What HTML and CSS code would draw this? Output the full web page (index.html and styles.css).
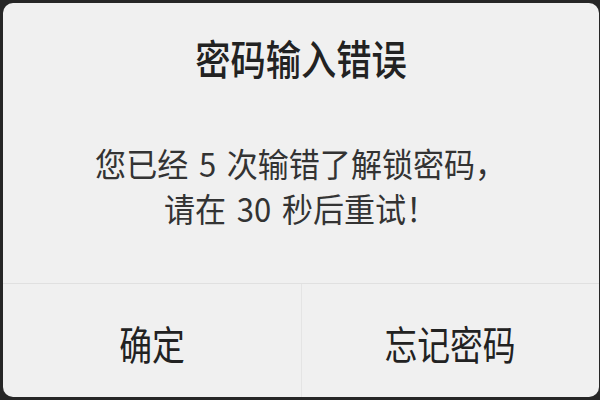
FILE: index.html
```html
<!DOCTYPE html>
<html lang="zh-CN">
<head>
    <meta charset="UTF-8">
    <link rel="stylesheet" href="styles.css">
    <title>密码输入错误</title>
</head>
<body>
<div class="dialog">
    <div class="dialogBody">
        <h2 class="dialogTitle"><span class="narrow">密码输入错误</span></h2>
        <p class="dialogMessage"><span class="narrow">您已经 5 次输错了解锁密码，<br>请在 30 秒后重试！</span></p>
    </div>
    <div class="dialogActions">
        <button class="actionButton" type="button"><span class="narrow">确定</span></button>
        <button class="actionButton actionRight" type="button"><span class="narrow">忘记密码</span></button>
    </div>
</div>
</body>
</html>
```

FILE: styles.css
```css
html, body {
    margin: 0;
    height: 100%;
}

body {
    background-color: #262626;
    font-family: "Noto Sans CJK SC", "Noto Sans", sans-serif;
    padding: 3px 1px 3px 3px;
    box-sizing: border-box;
}

.dialog {
    height: 100%;
    background-color: #f0f0f0;
    border-radius: 10px;
    display: flex;
    flex-direction: column;
    overflow: hidden;
}

.narrow {
    display: inline-block;
    transform: scaleX(0.86);
}

.dialogBody {
    flex: 1;
    text-align: center;
    color: #2a2a2a;
}

.dialogTitle {
    margin: 31px 0 0 0;
    font-size: 41px;
    font-weight: 500;
    line-height: 46px;
    color: #222;
}

.dialogMessage {
    margin: 61px 0 0 0;
    font-size: 33px;
    line-height: 45px;
    color: #333;
    word-spacing: 4px;
}

.dialogMessage .narrow {
    transform: scaleX(0.94);
}

.dialogActions {
    height: 113px;
    border-top: 1px solid #e0e0e0;
    display: flex;
}

.actionButton {
    flex: 1;
    background: none;
    border: none;
    font-family: "Noto Sans CJK SC", "Noto Sans", sans-serif;
    font-size: 40px;
    color: #222;
    padding: 4px 0 0 0;
    cursor: pointer;
}

.actionButton .narrow {
    transform: scaleX(0.82);
}

.actionRight {
    border-left: 1px solid #e4e4e4;
}
```
